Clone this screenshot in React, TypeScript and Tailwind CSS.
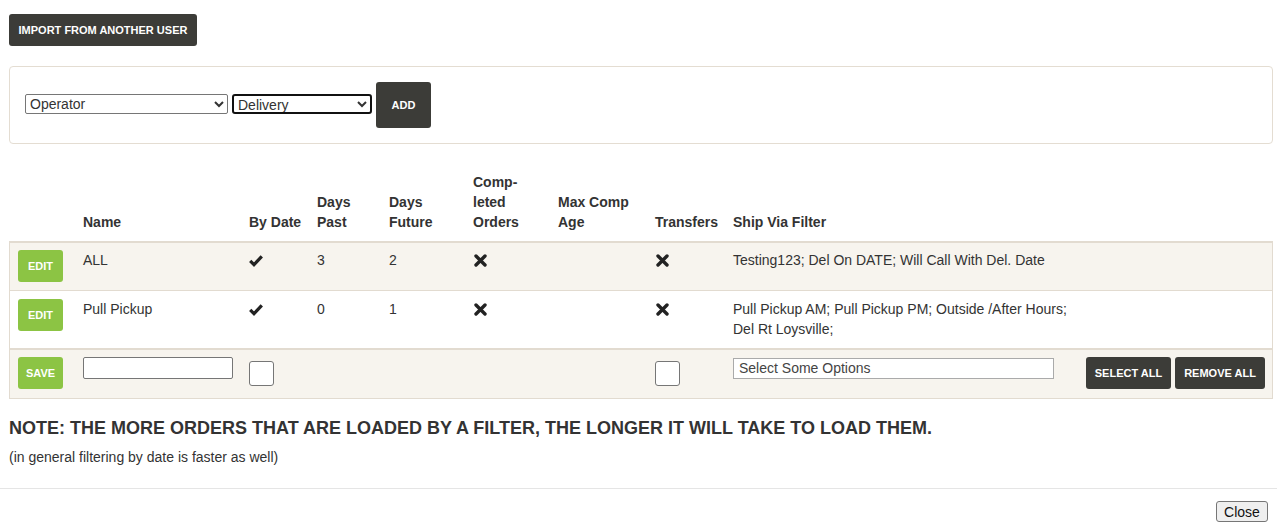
import React from "react";

const font = "font-['Liberation_Sans',Arial,sans-serif]";
const line = "border-[#e2dbd0]";

function Check() {
  return (
    <svg width="14" height="13" viewBox="0 0 14 13" className="mt-[4px]">
      <path d="M1.2 6.8 L5 10.6 L12.8 2.4" fill="none" stroke="#222" strokeWidth="3.2" strokeLinejoin="miter" />
    </svg>
  );
}

function Cross() {
  return (
    <svg width="13" height="13" viewBox="0 0 13 13" className="mt-[4px] ml-[1px]">
      <path d="M2 2 L11 11 M11 2 L2 11" fill="none" stroke="#222" strokeWidth="3.4" strokeLinecap="round" />
    </svg>
  );
}

function DarkButton({ children, className = "" }: { children: React.ReactNode; className?: string }) {
  return (
    <button
      className={`bg-[#3c3c38] text-white text-[11px] font-bold rounded-[3px] uppercase leading-none ${className}`}
    >
      {children}
    </button>
  );
}

function GreenButton({ children }: { children: React.ReactNode }) {
  return (
    <button className="block w-[45px] h-[32px] bg-[#8cc444] text-white text-[11px] font-bold rounded-[3px] leading-none">
      {children}
    </button>
  );
}

type Row = {
  name: string;
  byDate: boolean;
  past: string;
  future: string;
  completed: boolean;
  transfers: boolean;
  shipVia: string;
  cell: string;
};

const rows: Row[] = [
  {
    name: "ALL",
    byDate: true,
    past: "3",
    future: "2",
    completed: false,
    transfers: false,
    shipVia: "Testing123; Del On DATE; Will Call With Del. Date",
    cell: `bg-[#f7f4ee] border-t-2 ${line} pt-[7px] pb-[8px]`,
  },
  {
    name: "Pull Pickup",
    byDate: true,
    past: "0",
    future: "1",
    completed: false,
    transfers: false,
    shipVia: "Pull Pickup AM; Pull Pickup PM; Outside /After Hours; Del Rt Loysville;",
    cell: `bg-white border-t ${line} pt-[8px] pb-[9px]`,
  },
];

const base = "pl-[9px] align-top leading-[20px]";
const first = `pl-[8px] align-top leading-[20px] border-l ${line}`;
const lastCol = `border-r ${line}`;
const footCell = `bg-[#f7f4ee] border-t-2 border-b ${line} pt-[7px] pb-[9px]`;

export default function App() {
  return (
    <div className={`${font} text-[#333] text-[14px] bg-white min-h-[531px]`}>
      <div className="pl-[9px] pr-[4px] pt-[14px]">
        <DarkButton className="w-[188px] h-[32px]">Import from another user</DarkButton>

        <div className="mt-[20px] border border-[#e4ddd2] rounded-[4px] px-[15px] py-[15px] flex items-center">
          <select className="w-[203px] h-[20px] mb-[2px] border border-[#767676] rounded-[2px] text-[14px] leading-[16px] pl-0 bg-white">
            <option>Operator</option>
          </select>
          <select className="ml-[4px] mb-[2px] w-[140px] h-[20px] border-2 border-[#111] rounded-[3px] text-[14px] leading-[16px] pl-0 bg-white">
            <option>Delivery</option>
          </select>
          <DarkButton className="ml-[4px] w-[55px] h-[46px]">Add</DarkButton>
        </div>

        <table className="mt-[20px] w-[1264px] table-fixed border-separate border-spacing-0">
          <colgroup>
            <col className="w-[65px]" />
            <col className="w-[166px]" />
            <col className="w-[68px]" />
            <col className="w-[72px]" />
            <col className="w-[84px]" />
            <col className="w-[85px]" />
            <col className="w-[97px]" />
            <col className="w-[78px]" />
            <col className="w-[353px]" />
            <col className="w-[196px]" />
          </colgroup>
          <thead>
            <tr className="font-bold leading-[20px] text-left">
              {[
                [""],
                ["Name"],
                ["By Date"],
                ["Days", "Past"],
                ["Days", "Future"],
                ["Comp-", "leted", "Orders"],
                ["Max Comp", "Age"],
                ["Transfers"],
                ["Ship Via Filter"],
                [""],
              ].map((lines, i) => (
                <th key={i} className="pl-[9px] pt-[8px] pb-[9px] align-bottom font-bold whitespace-nowrap">
                  {lines.map((l, j) => (
                    <div key={j}>{l || "\u00a0"}</div>
                  ))}
                </th>
              ))}
            </tr>
          </thead>
          <tbody>
            {rows.map((r, i) => (
              <tr key={i}>
                <td className={`${first} ${r.cell}`}>
                  <GreenButton>EDIT</GreenButton>
                </td>
                <td className={`${base} ${r.cell}`}>{r.name}</td>
                <td className={`${base} ${r.cell}`}>{r.byDate ? <Check /> : null}</td>
                <td className={`${base} ${r.cell}`}>{r.past}</td>
                <td className={`${base} ${r.cell}`}>{r.future}</td>
                <td className={`${base} ${r.cell}`}>{r.completed ? <Check /> : <Cross />}</td>
                <td className={`${base} ${r.cell}`}></td>
                <td className={`${base} ${r.cell}`}>{r.transfers ? <Check /> : <Cross />}</td>
                <td className={`${base} ${r.cell} pr-[6px]`}>{r.shipVia}</td>
                <td className={`${base} ${r.cell} ${lastCol}`}></td>
              </tr>
            ))}
            <tr>
              <td className={`${first} ${footCell}`}>
                <GreenButton>SAVE</GreenButton>
              </td>
              <td className={`${base} ${footCell}`}>
                <input className="block w-[150px] h-[22px] border border-[#767676] rounded-[2px] bg-white" />
              </td>
              <td className={`${base} ${footCell}`}>
                <input
                  type="checkbox"
                  className="block mt-[4px] appearance-none w-[25px] h-[25px] border border-[#767676] rounded-[3px] bg-white"
                />
              </td>
              <td className={`${base} ${footCell}`}></td>
              <td className={`${base} ${footCell}`}></td>
              <td className={`${base} ${footCell}`}></td>
              <td className={`${base} ${footCell}`}></td>
              <td className={`${base} ${footCell}`}>
                <input
                  type="checkbox"
                  className="block mt-[4px] appearance-none w-[25px] h-[25px] border border-[#767676] rounded-[3px] bg-white"
                />
              </td>
              <td className={`${base} ${footCell}`}>
                <div className="mt-[1px] w-[321px] h-[21px] border border-[#aaa] bg-white text-[#444] text-[14px] leading-[19px] pl-[5px]">
                  Select Some Options
                </div>
              </td>
              <td className={`${base} ${footCell} ${lastCol}`}>
                <div className="flex gap-[4px]">
                  <DarkButton className="w-[85px] h-[32px]">Select All</DarkButton>
                  <DarkButton className="w-[90px] h-[32px]">Remove All</DarkButton>
                </div>
              </td>
            </tr>
          </tbody>
        </table>

        <div className="mt-[19px] text-[18px] font-bold leading-[20px] uppercase text-[#333]">
          Note: The more orders that are loaded by a filter, the longer it will take to load them.
        </div>
        <div className="mt-[11px] text-[14px] leading-[16px] text-[#333]">
          (in general filtering by date is faster as well)
        </div>
      </div>

      <div className="mt-[23px] border-t border-[#e5e5e5]"></div>
      <div className="flex justify-end pr-[9px] pt-[12px]">
        <button className="w-[52px] h-[21px] bg-[#efefef] border border-[#767676] rounded-[3px] text-[14px] text-[#111] leading-[18px]">
          Close
        </button>
      </div>
    </div>
  );
}
